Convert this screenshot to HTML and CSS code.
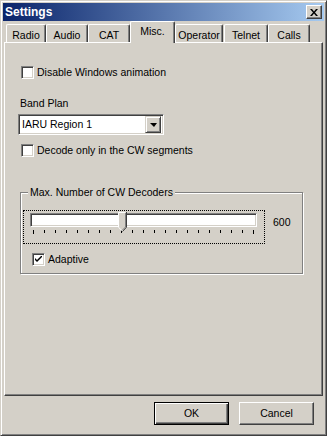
FILE: index.html
```html
<!DOCTYPE html>
<html>
<head>
	<meta charset="utf-8">
	<title>Settings</title>
	<link rel="stylesheet" href="styles.css">
</head>
<body>
	<div class="window">
		<div class="titlebar">
			<span class="title">Settings</span>
			<span class="close"><svg width="8" height="7" viewBox="0 0 8 7"><path d="M0 0h2l2 2.4L6 0h2L5 3.5 8 7H6L4 4.6 2 7H0l3-3.5z"/></svg></span>
		</div>
		<ul class="tabs">
			<li class="tab tab-radio">Radio</li>
			<li class="tab tab-audio">Audio</li>
			<li class="tab tab-cat">CAT</li>
			<li class="tab tab-misc active">Misc.</li>
			<li class="tab tab-operator">Operator</li>
			<li class="tab tab-telnet">Telnet</li>
			<li class="tab tab-calls">Calls</li>
		</ul>
		<div class="panel">
			<label class="check first"><span class="box"></span>Disable Windows animation</label>
			<div class="field-label">Band Plan</div>
			<div class="combo">
				<span class="combo-text">IARU Region 1</span>
				<span class="combo-btn"><span class="arrow"></span></span>
			</div>
			<label class="check"><span class="box"></span>Decode only in the CW segments</label>
			<fieldset class="group">
				<legend>Max. Number of CW Decoders</legend>
				<div class="slider-row">
					<div class="slider">
						<div class="track"></div>
						<svg class="thumb" width="9" height="20" viewBox="0 0 9 20">
							<path d="M0 0h8v15l-4 4-4-4z" fill="#d4d0c8"/>
							<path d="M0.5 15V0.5h7" fill="none" stroke="#fff"/>
							<path d="M8.5 0v15.2L4.5 19.5" fill="none" stroke="#404040"/>
							<path d="M7.5 1v14L4.5 18" fill="none" stroke="#808080"/>
							<path d="M0.5 15.2L4 18.7" fill="none" stroke="#fff"/>
						</svg>
						<div class="ticks">
							<i class="long"></i><i></i><i></i><i></i><i></i><i></i><i></i><i></i><i></i><i></i><i></i><i></i><i></i><i></i><i></i><i></i><i></i><i></i><i></i><i></i><i class="long"></i>
						</div>
					</div>
					<span class="value">600</span>
				</div>
				<label class="check adaptive"><span class="box checked"><svg width="7" height="7" viewBox="0 0 7 7"><path d="M0 2l2 2 5-5v2L2 6 0 4z"/></svg></span>Adaptive</label>
			</fieldset>
		</div>
		<div class="footer">
			<button class="btn default">OK</button>
			<button class="btn">Cancel</button>
		</div>
	</div>
</body>
</html>
```

FILE: styles.css
```css
*{
	padding: 0;
	margin: 0;
	box-sizing: border-box;
}
body{
	background: #d4d0c8;
	font-family: "Liberation Sans", Arial, sans-serif;
	font-size: 10.5px;
	line-height: 13px;
	color: #000;
}
.window{
	width: 327px;
	height: 436px;
	border: 1px solid;
	border-color: #d4d0c8 #404040 #404040 #d4d0c8;
	box-shadow: inset 1px 1px #fff, inset -1px -1px #808080;
	padding: 2px;
	display: flex;
	flex-direction: column;
}
.titlebar{
	height: 18px;
	background: linear-gradient(to right, #0a246a, #a6caf0);
	display: flex;
	align-items: center;
	justify-content: space-between;
	padding-left: 2px;
	padding-right: 2px;
}
.title{
	color: #fff;
	font-weight: bold;
	font-size: 12px;
	line-height: 18px;
}
.close{
	width: 16px;
	height: 14px;
	background: #d4d0c8;
	border: 1px solid;
	border-color: #fff #404040 #404040 #fff;
	box-shadow: inset -1px -1px #808080;
	display: flex;
	align-items: center;
	justify-content: center;
	padding-right: 1px;
}
.close svg{
	display: block;
}

/* tabs */
.tabs{
	list-style: none;
	height: 21px;
	display: flex;
	align-items: flex-end;
	padding-left: 2px;
	margin: 0 1px;
}
.tab{
	height: 18px;
	border-top: 1px solid #fff;
	border-left: 1px solid #fff;
	border-right: 1px solid #404040;
	box-shadow: inset -1px 0 #808080;
	border-radius: 2px 2px 0 0;
	text-align: center;
	padding-top: 4px;
	white-space: nowrap;
}
.tab-radio{ width: 40px; }
.tab-audio{ width: 42px; }
.tab-cat{ width: 42px; }
.tab-misc{ width: 45px; }
.tab-operator{ width: 48px; }
.tab-telnet{ width: 44px; margin-left: 1px; }
.tab-calls{ width: 42px; }
.tab.active{
	height: 22px;
	margin-bottom: -1px;
	padding-top: 3px;
	background: #d4d0c8;
	position: relative;
	z-index: 1;
}

/* page */
.panel{
	flex: 1;
	margin: 0 1px;
	border: 1px solid;
	border-color: #fff #404040 #404040 #fff;
	box-shadow: inset -1px -1px #808080;
	padding-left: 13px;
}
.check{
	display: flex;
	align-items: center;
	height: 13px;
	margin-left: 3px;
	margin-top: 9px;
}
.check.first{
	margin-top: 23px;
}
.box{
	width: 13px;
	height: 13px;
	background: #fff;
	border: 1px solid;
	border-color: #808080 #fff #fff #808080;
	box-shadow: inset 1px 1px #404040, inset -1px -1px #d4d0c8;
	margin-right: 3px;
	display: flex;
	align-items: center;
	justify-content: center;
}
.box svg{
	display: block;
}
.field-label{
	margin-top: 18px;
	margin-left: 2px;
}
.combo{
	width: 146px;
	height: 21px;
	margin-top: 4px;
	background: #fff;
	border: 1px solid;
	border-color: #808080 #fff #fff #808080;
	box-shadow: inset 1px 1px #404040, inset -1px -1px #d4d0c8;
	display: flex;
	align-items: center;
	justify-content: space-between;
	padding: 2px 2px 2px 3px;
}
.combo-btn{
	width: 16px;
	height: 17px;
	background: #d4d0c8;
	border: 1px solid;
	border-color: #d4d0c8 #404040 #404040 #d4d0c8;
	box-shadow: inset 1px 1px #fff, inset -1px -1px #808080;
	display: flex;
	align-items: center;
	justify-content: center;
}
.arrow{
	width: 0;
	height: 0;
	border-left: 4px solid transparent;
	border-right: 3px solid transparent;
	border-top: 4px solid #000;
	margin-top: 1px;
}

/* group box */
.group{
	width: 283px;
	margin-top: 29px;
	margin-left: 2px;
	border: 1px solid #808080;
	box-shadow: 1px 1px 0 #fff, inset 1px 1px 0 #fff;
	padding: 0 0 7px;
}
.group legend{
	margin-left: 7px;
	padding: 0 2px;
	background: #d4d0c8;
}
.slider-row{
	display: flex;
	align-items: center;
	margin-top: 11px;
	margin-left: 2px;
}
.slider{
	width: 242px;
	height: 34px;
	border: 1px dotted #000;
	position: relative;
	padding: 2px 0 0 6px;
}
.track{
	width: 227px;
	height: 14px;
	background: #fff;
	border: 1px solid;
	border-color: #808080 #fff #fff #808080;
	box-shadow: inset 1px 1px #404040, inset -1px -1px #d4d0c8;
}
.thumb{
	position: absolute;
	left: 94px;
	top: 1px;
}
.ticks{
	display: flex;
	justify-content: space-between;
	align-items: flex-start;
	width: 221px;
	margin-left: 3px;
	margin-top: 3px;
}
.ticks i{
	display: block;
	width: 1px;
	height: 3px;
	background: #000;
}
.ticks i.long{
	height: 4px;
}
.value{
	margin-left: 8px;
	margin-top: -10px;
}
.check.adaptive{
	margin-top: 9px;
	margin-left: 11px;
}

/* buttons */
.footer{
	height: 37px;
	display: flex;
	justify-content: flex-end;
	gap: 10px;
	padding: 6px 10px 0 0;
}
.btn{
	width: 75px;
	height: 23px;
	font: inherit;
	color: #000;
	background: #d4d0c8;
	border: 1px solid;
	border-color: #fff #404040 #404040 #fff;
	box-shadow: inset -1px -1px #808080;
}
.btn.default{
	border-color: #000;
	box-shadow: inset 1px 1px #fff, inset -1px -1px #404040, inset -2px -2px #808080;
}
```
